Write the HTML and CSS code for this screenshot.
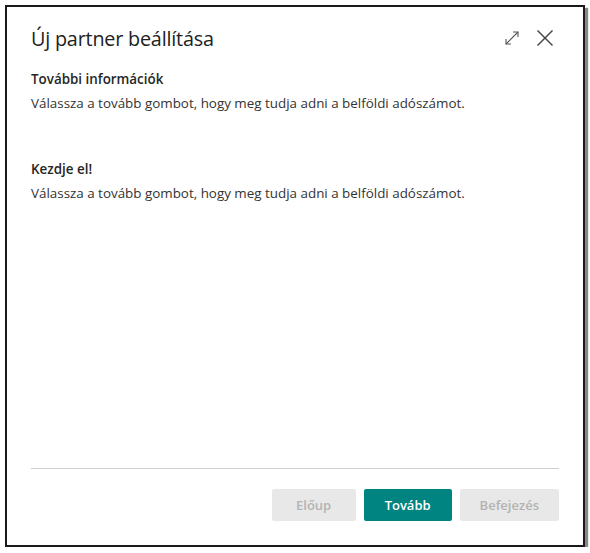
FILE: index.html
```html
<!DOCTYPE html>
<html lang="hu">
<head>
<meta charset="UTF-8">
<meta name="viewport" content="width=device-width, initial-scale=1.0">
<title>Új partner beállítása</title>
<link rel="stylesheet" href="styles.css">
</head>
<body>

<div class="dialog">
    <div class="dialog-header">
        <h1 class="dialog-title">Új partner beállítása</h1>
        <div class="header-icons">
            <span class="icon-btn" title="Teljes méret">
                <svg width="16" height="16" viewBox="0 0 16 16" fill="none" stroke="#555" stroke-width="1.1">
                    <path d="M2 14 L14 2"/>
                    <path d="M9 2 H14 V7"/>
                    <path d="M2 9 V14 H7"/>
                </svg>
            </span>
            <span class="icon-btn" title="Bezárás">
                <svg width="18" height="18" viewBox="0 0 18 18" fill="none" stroke="#444" stroke-width="1.4">
                    <path d="M1.5 1.5 L16.5 16.5"/>
                    <path d="M16.5 1.5 L1.5 16.5"/>
                </svg>
            </span>
        </div>
    </div>

    <div class="dialog-body">
        <div class="section">
            <h2>További információk</h2>
            <p>Válassza a tovább gombot, hogy meg tudja adni a belföldi adószámot.</p>
        </div>
        <div class="section">
            <h2>Kezdje el!</h2>
            <p>Válassza a tovább gombot, hogy meg tudja adni a belföldi adószámot.</p>
        </div>
    </div>

    <div class="dialog-footer">
        <button class="btn" disabled>Előup</button>
        <button class="btn primary">Tovább</button>
        <button class="btn" disabled>Befejezés</button>
    </div>
</div>

</body>
</html>
```

FILE: styles.css
```css
body {
    font-family: "Open Sans", "Noto Sans", Arial, sans-serif;
    background-color: #fff;
    margin: 0;
    padding: 0;
    color: #222;
}

.dialog {
    box-sizing: border-box;
    width: 580px;
    height: 542px;
    margin: 5px 0 0 5px;
    border: 2px solid #1a1a1a;
    box-shadow: 3px 3px 1px #888;
    background-color: #fff;
    display: flex;
    flex-direction: column;
    padding: 0 24px 0 24px;
}

.dialog-header {
    display: flex;
    align-items: center;
    justify-content: space-between;
    padding-top: 17px;
    height: 28px;
}

.dialog-title {
    font-size: 19.8px;
    font-weight: 400;
    margin: 0;
    color: #212121;
    letter-spacing: -0.2px;
}

.header-icons {
    display: flex;
    align-items: center;
    gap: 16px;
    margin-right: 5px;
}

.icon-btn {
    display: flex;
    cursor: pointer;
}

.dialog-body {
    flex: 1;
    padding-top: 18px;
}

.section {
    margin-bottom: 48px;
}

.section h2 {
    font-size: 13.4px;
    font-weight: 600;
    margin: 0 0 6px 0;
    color: #262626;
}

.section p {
    font-size: 13.4px;
    margin: 0;
    color: #333;
}

.dialog-footer {
    display: flex;
    justify-content: flex-end;
    gap: 8px;
    border-top: 1px solid #cfcfcf;
    padding: 20px 0 24px 0;
}

.btn {
    font-family: inherit;
    font-size: 13px;
    font-weight: 600;
    height: 32px;
    min-width: 84px;
    padding: 0 20px;
    border: none;
    border-radius: 2px;
    background-color: #e8e8e8;
    color: #b3b3b3;
}

.btn.primary {
    background-color: #008481;
    color: #fff;
    padding: 0 21px;
    cursor: pointer;
}
```
